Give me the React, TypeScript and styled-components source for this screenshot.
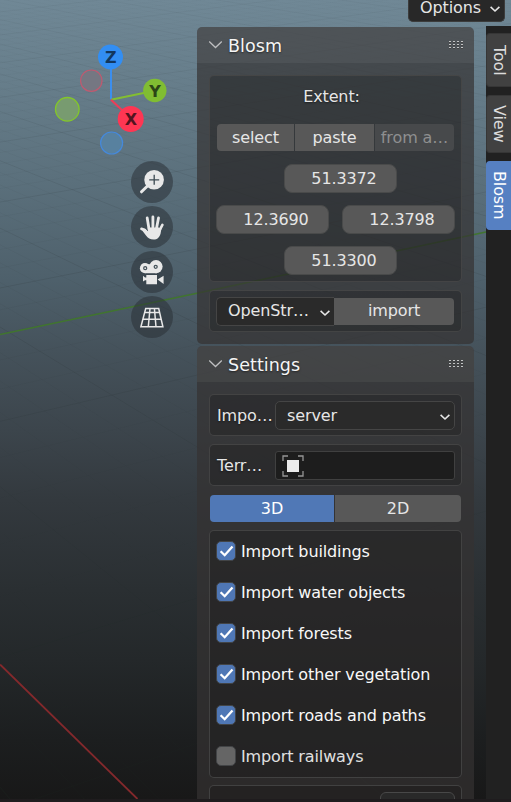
import React from "react";
import styled, { createGlobalStyle, css } from "styled-components";

const GlobalStyle = createGlobalStyle`
  *, *::before, *::after { box-sizing: border-box; }
  html, body { margin: 0; padding: 0; background: #191919; overflow: hidden; }
  button { font: inherit; letter-spacing: inherit; border: 0; padding: 0; margin: 0; }
`;

const Window = styled.div`
  width: 511px;
  height: 802px;
  display: flex;
  flex-direction: column;
  overflow: hidden;
  font: 16px/20px "DejaVu Sans", sans-serif;
  letter-spacing: -0.12px;
  color: #e6e6e6;
  background: #1f1c1e;
`;

const Viewport = styled.main`
  position: relative;
  height: 799px;
  flex: none;
  display: flex;
  flex-direction: column;
  overflow: hidden;
  background: linear-gradient(
    180deg,
    #708896 0px,
    #677e8b 80px,
    #5b707c 180px,
    #4e606b 280px,
    #45525b 350px,
    #3c454c 430px,
    #33393e 500px,
    #2a2f32 590px,
    #24282a 660px,
    #1c1e1f 740px,
    #181818 799px
  );
`;

const Scene = styled.svg`
  position: absolute;
  inset: 0;
  width: 511px;
  height: 799px;
`;

const TopBar = styled.header`
  position: relative;
  height: 26px;
  flex: none;
  display: flex;
  justify-content: flex-end;
  align-items: flex-start;
  padding-right: 6px;
`;

const OptionsButton = styled.button`
  width: 97px;
  height: 22px;
  display: flex;
  align-items: flex-start;
  justify-content: space-between;
  padding: 0 3px 0 11px;
  line-height: 15px;
  color: #e6e6e6;
  background: #282828;
  border: 1px solid #3c3c3c;
  border-top: 0;
  border-radius: 0 0 5px 5px;
  svg { margin-top: 3px; }
`;

const Body = styled.div`
  position: relative;
  flex: 1;
  display: flex;
  min-height: 0;
`;

const Tools = styled.div`
  width: 197px;
  flex: none;
  display: flex;
  flex-direction: column;
`;

const Gizmo = styled.svg`
  width: 197px;
  height: 135px;
  flex: none;
  font: bold 16px "DejaVu Sans", sans-serif;
`;

const NavStack = styled.div`
  display: flex;
  flex-direction: column;
  align-items: center;
  gap: 3px;
  width: 42px;
  margin-left: 131px;
`;

const NavButton = styled.button`
  width: 42px;
  height: 42px;
  border-radius: 50%;
  background: rgba(42, 48, 52, 0.53);
  svg { display: block; }
`;

const Sidebar = styled.aside`
  width: 277px;
  flex: none;
  display: flex;
  flex-direction: column;
  gap: 2px;
  padding-top: 1px;
`;

const Panel = styled.section<{ $height: number; $cut?: boolean }>`
  height: ${(p) => p.$height}px;
  flex: none;
  overflow: hidden;
  background: rgba(52, 50, 50, 0.7);
  border-radius: ${(p) => (p.$cut ? "5px 5px 0 0" : "5px")};
`;

const PanelHeader = styled.div`
  height: 36px;
  display: flex;
  align-items: center;
  padding: 0 10px 0 12px;
  background: rgba(255, 255, 255, 0.05);
`;

const PanelTitle = styled.h2`
  flex: 1;
  margin: 1px 0 0 6px;
  font: 17.5px/22px "DejaVu Sans", sans-serif;
  letter-spacing: 0.05px;
  color: #f5f5f5;
  text-shadow: 0 1px 2px rgba(0, 0, 0, 0.5);
`;

const PanelBody = styled.div`
  display: flex;
  flex-direction: column;
  gap: 8px;
  padding: 12px 12px 0;
`;

const Box = styled.div<{ $height: number }>`
  height: ${(p) => p.$height}px;
  flex: none;
  padding: 6px;
  background: rgba(0, 0, 0, 0.18);
  border: 1px solid rgba(72, 72, 72, 0.8);
  border-radius: 5px;
`;

const ExtentBox = styled(Box)`
  display: flex;
  flex-direction: column;
  gap: 12px;
`;

const ExtentLabel = styled.div`
  height: 30px;
  flex: none;
  padding: 5px 8px 0 0;
  text-align: center;
  text-shadow: 0 1px 2px rgba(0, 0, 0, 0.5);
`;

const Line = styled.div`
  display: flex;
  align-items: center;
`;

const FieldLine = styled.div<{ $center?: boolean }>`
  display: flex;
  padding-left: ${(p) => (p.$center ? "10px" : "0")};
  justify-content: ${(p) => (p.$center ? "center" : "space-between")};
`;

const Segments = styled.div<{ $columns: string }>`
  display: grid;
  grid-template-columns: ${(p) => p.$columns};
  gap: 1px;
  height: 27px;
  flex: none;
  border-radius: 4px;
  overflow: hidden;
`;

const ExtentActions = styled(Segments)`
  margin: 0 1px 1px;
`;

const DimensionToggle = styled(Segments)`
  margin: 1px 1px 0;
`;

const Segment = styled.button<{ $active?: boolean; $muted?: boolean }>`
  height: 27px;
  color: #e6e6e6;
  background: #585858;
  line-height: 27px;
  ${(p) => p.$active && css`background: #5078b6; color: #fff;`}
  ${(p) => p.$muted && css`background: #47494b; color: #8e8f90;`}
`;

const NumberField = styled.div`
  width: 113px;
  height: 29px;
  padding-left: 7px;
  line-height: 27px;
  text-align: center;
  background: #585858;
  border: 1px solid #494a4a;
  border-radius: 8px;
`;

const Select = styled.button<{ $width: number; $joined?: boolean }>`
  width: ${(p) => p.$width}px;
  height: 29px;
  flex: none;
  display: flex;
  align-items: center;
  justify-content: space-between;
  padding: 0 3px 0 11px;
  color: #e6e6e6;
  background: #2a2a2a;
  border: 1px solid #454545;
  border-radius: ${(p) => (p.$joined ? "5px 0 0 5px" : "5px")};
  ${(p) => p.$joined && css`border-right: 0; padding-bottom: 1px;`}
  svg { margin-top: 3px; }
`;

const ImportButton = styled.button`
  width: 120px;
  height: 27px;
  padding-bottom: 1px;
  color: #e6e6e6;
  background: #585858;
  border-radius: 0 4px 4px 0;
`;

const PropLabel = styled.span`
  width: 59px;
  padding-left: 1px;
  flex: none;
  white-space: nowrap;
  text-shadow: 0 1px 2px rgba(0, 0, 0, 0.5);
`;

const ObjectField = styled.div`
  width: 180px;
  height: 29px;
  padding: 3px 0 0 6px;
  background: #1d1d1d;
  border: 1px solid #404040;
  border-radius: 3px;
  svg { display: block; }
`;

const CheckBoxList = styled(Box)`
  display: flex;
  flex-direction: column;
  gap: 12px;
`;

const NextBox = styled(Box)`
  margin-top: -1px;
`;

const CheckRow = styled.label`
  height: 29px;
  display: flex;
  align-items: center;
  gap: 5px;
  white-space: nowrap;
`;

const CheckMark = styled.span<{ $on: boolean }>`
  width: 20px;
  height: 20px;
  margin-top: -1px;
  flex: none;
  border-radius: 5px;
  border: 1px solid #424446;
  background: ${(p) => (p.$on ? "#4f77b5" : "#656565")};
  svg { display: block; }
`;

const CheckLabel = styled.span<{ $on: boolean }>`
  color: ${(p) => (p.$on ? "#f8f8f8" : "#e0e0e0")};
  line-height: 20px;
`;

const CutField = styled.div`
  width: 75px;
  height: 29px;
  margin-left: auto;
  border: 1px solid #484848;
  border-radius: 6px;
  background: #292929;
`;

const Tabs = styled.nav`
  width: 25px;
  margin-left: 12px;
  flex: none;
  display: flex;
  flex-direction: column;
  gap: 8px;
  padding-top: 7px;
  background: #212121;
`;

const Tab = styled.button<{ $height: number; $active?: boolean }>`
  width: 25px;
  height: ${(p) => p.$height}px;
  display: flex;
  align-items: center;
  justify-content: center;
  writing-mode: vertical-rl;
  line-height: 25px;
  border-radius: 4px 0 0 4px;
  color: ${(p) => (p.$active ? "#fff" : "#dcdcdc")};
  background: ${(p) => (p.$active ? "#5680c2" : "#414141")};
  border: 1px solid ${(p) => (p.$active ? "#5680c2" : "#363636")};
  border-right: 0;
`;

const SmallChevron = () => (
  <svg width="12" height="12" viewBox="0 0 12 12" fill="none">
    <path d="M1.6 3.8l4.4 4.2 4.4-4.2" stroke="#e6e6e6" strokeWidth="1.6" />
  </svg>
);

const HeaderChevron = () => (
  <svg width="13" height="12" viewBox="0 0 13 12" fill="none">
    <path d="M.2 2.5l6.3 6 6.3-6" stroke="#bdbebf" strokeWidth="1.3" />
  </svg>
);

const Grip = () => (
  <svg width="16" height="9" viewBox="0 0 16 9">
    {[0, 3, 6].map((y) =>
      [0, 4, 8, 12].map((x) => (
        <g key={`${x}-${y}`}>
          <rect x={x + 1} y={y + 1} width="2" height="1" fill="#222" />
          <rect x={x + 1} y={y} width="2" height="1.2" fill="#c2c4c5" />
        </g>
      ))
    )}
  </svg>
);

const ZoomIcon = () => (
  <svg width="42" height="42" viewBox="0 0 42 42">
    <path d="M18 23.5l-7.5 7.3" stroke="#e8e8e8" strokeWidth="3" strokeLinecap="round" />
    <circle cx="23.1" cy="18.8" r="9.8" fill="#e8e8e8" />
    <path d="M23.2 13.8v10M18.2 18.8h10" stroke="#3d4a52" strokeWidth="1.3" />
  </svg>
);

const HandIcon = () => (
  <svg width="42" height="42" viewBox="0 0 42 42" fill="none" stroke="#e8e8e8" strokeLinecap="round" strokeLinejoin="round">
    <path d="M18 23L16.2 12M21.9 22V10.9M25.4 23L27.5 12" strokeWidth="2.8" />
    <path d="M28 25.5L31.4 18.8" strokeWidth="2.6" />
    <path d="M10.5 22.9l2.9.8 3.4 3.4" strokeWidth="2.7" />
    <path d="M16.7 21.5h11.2l2.4 1.5-.7 4.5c-.9 3.7-3.4 6.1-6.9 6.1-3.6 0-5.8-1.4-7.7-4.1L11 24.2l2.7-1.4 3.4 2.6z" fill="#e8e8e8" stroke="none" />
  </svg>
);

const CameraIcon = () => (
  <svg width="42" height="42" viewBox="0 0 42 42">
    <path d="M14 13.2h12v9H14z" fill="#e8e8e8" />
    <circle cx="14" cy="17.2" r="5.1" fill="#e8e8e8" />
    <circle cx="25" cy="15.6" r="6.6" fill="#e8e8e8" />
    <path d="M12 24.8l2 1.7h1.3V24H26v9.2H15.3v-4H14l-2 1.4zM26.6 28.5l6-3.8v8.4z" fill="#e8e8e8" />
    <circle cx="14.2" cy="17.2" r="1.5" fill="#e8e8e8" stroke="#46535b" strokeWidth="1.3" />
    <circle cx="24.7" cy="15.8" r="1.5" fill="#e8e8e8" stroke="#46535b" strokeWidth="1.3" />
  </svg>
);

const GridIcon = () => (
  <svg width="42" height="42" viewBox="0 0 42 42" fill="none" stroke="#e8e8e8" strokeWidth="1.5">
    <path d="M14.7 12.5h13l4.2 18.3H9.9zM13.4 16.5h15.4M11.8 23.2h18.8M19 12.5l-1.7 18.3M23.4 12.5l1.6 18.3" />
  </svg>
);

const Check = () => (
  <svg width="18" height="18" viewBox="0 0 18 18" fill="none">
    <path d="M3.6 9.2l4.1 4 7.8-8.7" stroke="#fff" strokeWidth="2.3" />
  </svg>
);

const ObjectIcon = () => (
  <svg width="22" height="22" viewBox="0 0 22 22" fill="none">
    <path d="M6 1H1v5M16 1h5v5M1 16v5h5M21 16v5h-5" stroke="#959595" strokeWidth="1.3" />
    <rect x="5" y="5" width="12" height="12" fill="#ececec" />
  </svg>
);

const layers = [
  { id: "buildings", label: "Import buildings", on: true },
  { id: "water", label: "Import water objects", on: true },
  { id: "forests", label: "Import forests", on: true },
  { id: "vegetation", label: "Import other vegetation", on: true },
  { id: "roads", label: "Import roads and paths", on: true },
  { id: "railways", label: "Import railways", on: false },
];

type FloorLine = { y: number; slope: number; major: boolean };

// Floor lines start at the left edge; spacing and slope grow with distance from the horizon.
function floorLines(from: number, to: number, slopeAt: (y: number) => number): FloorLine[] {
  const lines: FloorLine[] = [];
  let index = 0;
  for (let y = from; y < to; y += 0.000106 * (y + 150) ** 2 + 1.5) {
    lines.push({ y, slope: slopeAt(y), major: index % 5 === 0 });
    index += 1;
  }
  return lines;
}

const floor = [
  ...floorLines(-60, 800, (y) => 0.2 + 0.00125 * y),
  ...floorLines(12, 900, (y) => -(0.117 + 0.00028 * y)),
];

const ViewportScene = () => (
  <Scene viewBox="0 0 511 799" fill="none">
    <defs>
      <linearGradient id="floorFade" x1="0" y1="0" x2="0" y2="799" gradientUnits="userSpaceOnUse">
        <stop offset="0" stopColor="#37444b" stopOpacity=".15" />
        <stop offset=".2" stopColor="#37444b" stopOpacity=".38" />
        <stop offset=".4" stopColor="#2f383c" stopOpacity=".5" />
        <stop offset=".7" stopColor="#1c2726" stopOpacity=".25" />
        <stop offset="1" stopColor="#1c2c22" stopOpacity=".7" />
      </linearGradient>
    </defs>
    {floor.map((l, i) => (
      <path
        key={i}
        d={`M0 ${l.y.toFixed(1)}L511 ${(l.y + 511 * l.slope).toFixed(1)}`}
        stroke="url(#floorFade)"
        strokeOpacity={l.major ? 0.42 : 0.17}
      />
    ))}
    <path d="M0 334.5L197 293.3L486 232" stroke="#41752f" strokeWidth="1.5" />
    <path d="M0 664.5L137.5 799" stroke="#84292c" strokeWidth="1.8" />
  </Scene>
);

const AxisGizmo = () => (
  <Gizmo viewBox="0 26 197 135" textAnchor="middle">
    <circle cx="91.3" cy="80.7" r="10.7" fill="#757782" stroke="#bf5a70" strokeWidth="1.2" />
    <circle cx="67.3" cy="109.3" r="11.8" fill="#789b70" stroke="#83c729" strokeWidth="1.3" />
    <circle cx="111.6" cy="143" r="11" fill="#58819f" stroke="#4589dc" strokeWidth="1.2" />
    <path d="M111 99.5V66" stroke="#3b8eee" strokeWidth="2" />
    <path d="M111 99.8L146 92.5" stroke="#83be32" strokeWidth="2" />
    <path d="M111 99.8L124 112" stroke="#ed3d57" strokeWidth="2" />
    <circle cx="110.5" cy="57" r="12.5" fill="#328ef3" />
    <circle cx="154.8" cy="90.5" r="11.7" fill="#80bd32" />
    <circle cx="130.7" cy="119" r="13" fill="#ff3653" />
    <text x="110.7" y="63" fill="#12375e">Z</text>
    <text x="155" y="96.5" fill="#2b4516">Y</text>
    <text x="130.8" y="125" fill="#53141f">X</text>
  </Gizmo>
);

const ExtentFields = () => (
  <>
    <ExtentActions $columns="77px 79px 1fr">
      <Segment>select</Segment>
      <Segment>paste</Segment>
      <Segment $muted>from a…</Segment>
    </ExtentActions>
    <FieldLine $center><NumberField>51.3372</NumberField></FieldLine>
    <FieldLine><NumberField>12.3690</NumberField><NumberField>12.3798</NumberField></FieldLine>
    <FieldLine $center><NumberField>51.3300</NumberField></FieldLine>
  </>
);

export default function App() {
  return (
    <Window>
      <GlobalStyle />
      <Viewport>
        <ViewportScene />
        <TopBar>
          <OptionsButton>Options<SmallChevron /></OptionsButton>
        </TopBar>
        <Body>
          <Tools>
            <AxisGizmo />
            <NavStack>
              <NavButton aria-label="Zoom"><ZoomIcon /></NavButton>
              <NavButton aria-label="Pan"><HandIcon /></NavButton>
              <NavButton aria-label="Camera"><CameraIcon /></NavButton>
              <NavButton aria-label="Perspective"><GridIcon /></NavButton>
            </NavStack>
          </Tools>
          <Sidebar>
            <Panel $height={317}>
              <PanelHeader><HeaderChevron /><PanelTitle>Blosm</PanelTitle><Grip /></PanelHeader>
              <PanelBody>
                <ExtentBox $height={207}>
                  <ExtentLabel>Extent:</ExtentLabel>
                  <ExtentFields />
                </ExtentBox>
                <Box $height={42}>
                  <Line>
                    <Select $width={118} $joined>OpenStr…<SmallChevron /></Select>
                    <ImportButton>import</ImportButton>
                  </Line>
                </Box>
              </PanelBody>
            </Panel>
            <Panel $height={453} $cut>
              <PanelHeader><HeaderChevron /><PanelTitle>Settings</PanelTitle><Grip /></PanelHeader>
              <PanelBody>
                <Box $height={42}>
                  <Line><PropLabel>Impo…</PropLabel><Select $width={180}>server<SmallChevron /></Select></Line>
                </Box>
                <Box $height={42}>
                  <Line><PropLabel>Terr…</PropLabel><ObjectField><ObjectIcon /></ObjectField></Line>
                </Box>
                <DimensionToggle $columns="124px 1fr">
                  <Segment $active>3D</Segment>
                  <Segment>2D</Segment>
                </DimensionToggle>
                <CheckBoxList $height={248}>
                  {layers.map((l) => (
                    <CheckRow key={l.id}>
                      <CheckMark $on={l.on}>{l.on && <Check />}</CheckMark>
                      <CheckLabel $on={l.on}>{l.label}</CheckLabel>
                    </CheckRow>
                  ))}
                </CheckBoxList>
                <NextBox $height={42}><CutField /></NextBox>
              </PanelBody>
            </Panel>
          </Sidebar>
          <Tabs>
            <Tab $height={54}>Tool</Tab>
            <Tab $height={58}>View</Tab>
            <Tab $height={69} $active>Blosm</Tab>
          </Tabs>
        </Body>
      </Viewport>
    </Window>
  );
}
